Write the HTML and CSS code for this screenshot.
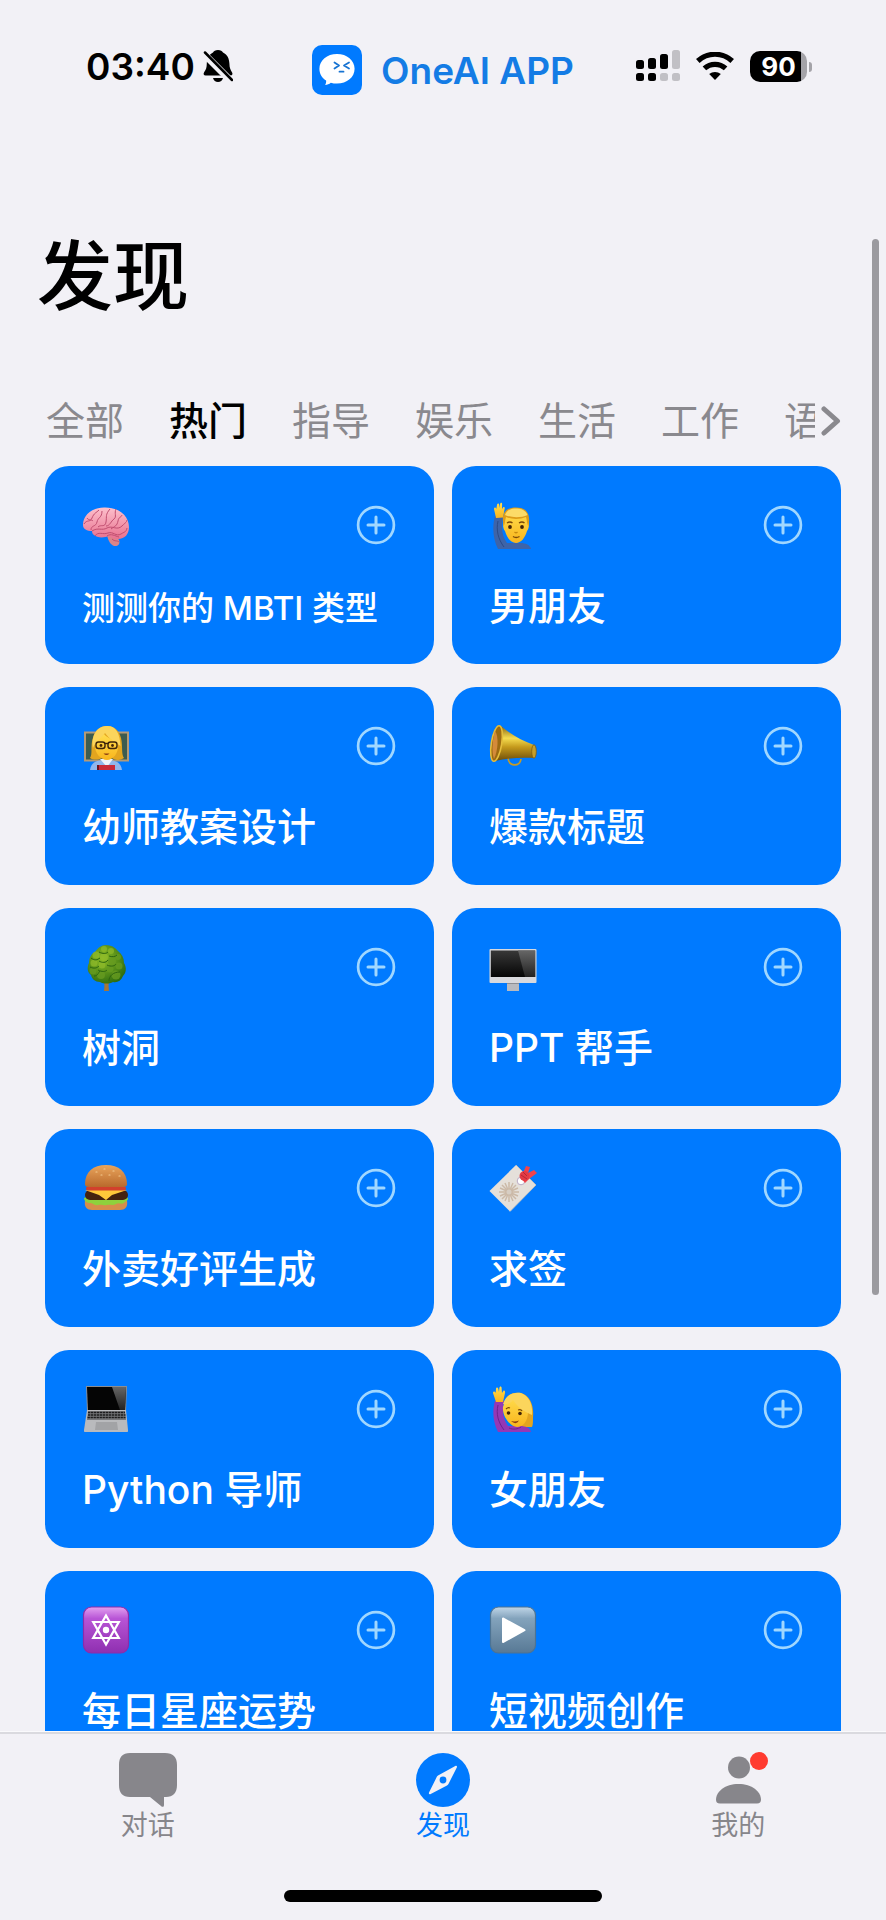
FILE: index.html
```html
<!DOCTYPE html>
<html lang="zh-CN">
<head>
<meta charset="utf-8">
<meta name="viewport" content="width=device-width, initial-scale=1">
<title>发现 - OneAI APP</title>
<link rel="stylesheet" href="styles.css">
</head>

<body>
<svg class="defs" aria-hidden="true">
    <symbol id="plus" viewBox="0 0 40 40">
        <circle cx="20" cy="20" r="17.9" fill="none" stroke="currentColor" stroke-width="2.7"/>
        <path d="M20 12v16M12 20h16" fill="none" stroke="currentColor" stroke-width="3" stroke-linecap="round"/>
    </symbol>
    <linearGradient id="gBrain" x1="0" y1="0" x2="0" y2="1"><stop offset="0" stop-color="#fdc0cc"/><stop offset="1" stop-color="#e8718f"/></linearGradient>
    <linearGradient id="gSkin" x1="0" y1="0" x2="0" y2="1"><stop offset="0" stop-color="#ffdc4d"/><stop offset="1" stop-color="#f9b51c"/></linearGradient>
    <linearGradient id="gGold" x1="0" y1="0" x2="0" y2="1"><stop offset="0" stop-color="#8a6410"/><stop offset=".35" stop-color="#f5dc50"/><stop offset=".6" stop-color="#c59a1c"/><stop offset="1" stop-color="#6d4c0a"/></linearGradient>
    <radialGradient id="gTree" cx=".4" cy=".35" r=".7"><stop offset="0" stop-color="#8cbc25"/><stop offset="1" stop-color="#2d6c10"/></radialGradient>
    <linearGradient id="gScreen" x1="0" y1="0" x2="0" y2="1"><stop offset="0" stop-color="#383838"/><stop offset="1" stop-color="#050505"/></linearGradient>
    <linearGradient id="gGlare" x1="0" y1="0" x2="0" y2="1"><stop offset="0" stop-color="#666"/><stop offset="1" stop-color="#222"/></linearGradient>
    <linearGradient id="gBun" x1="0" y1="0" x2="0" y2="1"><stop offset="0" stop-color="#e9a55c"/><stop offset="1" stop-color="#b9692c"/></linearGradient>
    <linearGradient id="gPurple" x1="0" y1="0" x2="0" y2="1"><stop offset="0" stop-color="#e3a0f0"/><stop offset=".25" stop-color="#b855d6"/><stop offset="1" stop-color="#8f2fb0"/></linearGradient>
    <linearGradient id="gSteel" x1="0" y1="0" x2="0" y2="1"><stop offset="0" stop-color="#c0d6e8"/><stop offset=".25" stop-color="#83a3bc"/><stop offset="1" stop-color="#587995"/></linearGradient>
</svg>

<div class="app">
    <header class="status">
        <div class="status-time">
            <span>03:40</span>
            <svg width="30" height="34" viewBox="0 0 30 34">
                <path d="M15 1c2.600 0 4.200 1 5 2.600 4.600 2.200 6.200 6.400 6.400 11 .1 4.400 1 6.300 2.700 8.800.8 1.500.3 3.100-1.500 3.100H2.600c-2 0-2.500-1.700-1.500-3.200 2-2.600 2.600-4.600 2.700-8.700C4 10 5.600 5.800 10 3.600 10.800 2 12.400 1 15 1z"/>
                <path d="M10 29h10c-.7 2.600-2.500 4-5 4s-4.300-1.400-5-4z"/>
                <path d="M-1 3l31 31" stroke="#f2f1f6" stroke-width="7"/>
                <path d="M2 3.500l27 27.500" stroke="#000" stroke-width="2.500" stroke-linecap="round"/>
            </svg>
        </div>
        <div class="brand">
            <svg width="50" height="50" viewBox="0 0 50 50">
                <rect width="50" height="50" rx="10" fill="#007aff"/>
                <path d="M25 9c10 0 17.600 6.300 17.600 14.800S35 38.600 25 38.600c-2.300 0-4.300-.3-6.200-.9-1.600 1.400-3.500 2.100-5.700 2.200.9-1.300 1.200-2.700 1-4.400C9.800 32.800 7.400 28.800 7.400 23.800 7.400 15.300 15 9 25 9z" fill="#fff"/>
                <path d="M22.500 17.500l4.500 3-4.500 3M37 17.500l-5 3 5 3M27.500 26.700h4" fill="none" stroke="#1673d2" stroke-width="1.800" stroke-linecap="round" stroke-linejoin="round"/>
            </svg>
            <span>OneAI APP</span>
        </div>
        <div class="status-icons">
            <svg width="44" height="32" viewBox="0 0 44 32">
                <rect x="0" y="10" width="8" height="9" rx="2.500"/><rect x="12" y="8" width="8" height="11" rx="2.500"/><rect x="24" y="4" width="8" height="15" rx="2.500"/>
                <rect x="0" y="23" width="8" height="8" rx="2.500"/><rect x="12" y="23" width="8" height="8" rx="2.500"/>
                <g fill="#c1c0c5"><rect x="36" y="0" width="8" height="19" rx="2.500"/><rect x="24" y="23" width="8" height="8" rx="2.500"/><rect x="36" y="23" width="8" height="8" rx="2.500"/></g>
            </svg>
            <svg width="38" height="28" viewBox="0 0 38 28">
                <path d="M19 28l-5.800-6c3.300-2.800 8.300-2.800 11.600 0z"/>
                <path d="M8.400 16.400c6-5.500 15.200-5.500 21.200 0" fill="none" stroke="#000" stroke-width="5.200"/>
                <path d="M1.800 9c9.700-9 24.700-9 34.400 0" fill="none" stroke="#000" stroke-width="5.200"/>
            </svg>
            <span class="battery">90</span>
        </div>
    </header>

    <main class="content">
        <h1>发现</h1>
        <div class="cats">
            <nav class="cats-list">
                <button type="button">全部</button>
                <button type="button" class="on">热门</button>
                <button type="button">指导</button>
                <button type="button">娱乐</button>
                <button type="button">生活</button>
                <button type="button">工作</button>
                <button type="button">语言</button>
            </nav>
            <button type="button" class="cats-more" aria-label="更多">
                <svg width="20" height="30" viewBox="0 0 20 30"><path d="M3 3l13.500 12L3 27" fill="none" stroke="currentColor" stroke-width="5" stroke-linecap="round" stroke-linejoin="round"/></svg>
            </button>
        </div>

        <div class="grid">
            <section class="card">
                <div class="card-top">
                    <svg class="emoji" viewBox="0 0 48 48">
                        <path d="M25 34c1 5 3 9.500 7 11 4 .6 6.500-2 5-6l-3-5z" fill="#d9858a"/>
                        <path d="M1 24C1 14 10 6.500 22 6.500 37 6 47 15 47 26c0 7-4 12-11 12-5 0-7-1.500-9-3-5 2-12 2-15-1-2-1.500-2-3-2-4C5 30 1 28 1 24z" fill="url(#gBrain)"/>
                        <path d="M2 23c3-5 6-1 8-6s4-5 7-8M9 29c0-5 5-3 6-8s5-4 5-11M16 26c3-3 7 1 8-5s-1-7 4-13M24 25c4 0 5-5 8-7s0-6 2-10M29 28c4-3 6-3 7-8s3-3 4-6M10 30c6-4 10 0 15-3s10 3 15-2 4-3 5-6M13 35c3-5 8-1 13-3s8 4 13 1 5-2 6-6M25 35c4-3 8 0 12 1M30 38c3 3 5 1 7 3M5 17c2 3 4 1 6 3" fill="none" stroke="#c04e70" stroke-width="1"/>
                    </svg>
                    <button type="button" class="add" aria-label="添加"><svg><use href="#plus"/></svg></button>
                </div>
                <h2 class="small">测测你的 MBTI 类型</h2>
            </section>

            <section class="card">
                <div class="card-top">
                    <svg class="emoji" viewBox="0 0 48 48">
                        <path d="M6 15c-3 11-2 23 3 33h33c-1-4-5-6-11-6H18c-5-7-6-14-4-26z" fill="#3e64a8"/>
                        <path d="M9 20c-2 9 0 18 6 26" fill="none" stroke="#2c4b87" stroke-width="1"/>
                        <path d="M7 17L5 8c0-2 2-2 2.300 0L8 4c.3-2 2.200-2 2.200 0l.2 3 .7-4c.4-2 2.300-1.500 2 .5L13 8l1-1.500c1-1 2.300 0 1.500 2l-1.500 8z" fill="url(#gSkin)"/>
                        <path d="M14 22c0-9 5-12 13-12s13 3 13 12c0 5-1 7-2 8-2 7-6 12-11 12s-9-5-11-12c-1-1-2-3-2-8z" fill="url(#gSkin)"/>
                        <path d="M14.500 25C12 12 17 6.500 27 6.500S42 12 39.500 25c-1.500-1-1.500-6-2.500-9-6 2.500-14 2.500-20 0-1 3-1 8-2.500 9z" fill="#dd9c1a"/>
                        <path d="M16 14c2-5 6-6.500 11-6.500s10 2 11.500 6.500c-6 3-16 3-22.500 0z" fill="#fcdb68"/>
                        <path d="M18 22q3-2 5.500 0M30 22q3-2 5.500 0" fill="none" stroke="#7a4909" stroke-width="1.400"/>
                        <circle cx="21" cy="26" r="1.900" fill="#442508"/><circle cx="33" cy="26" r="1.900" fill="#442508"/>
                        <path d="M24 35.500q3 2 6.500 0" fill="none" stroke="#7a4909" stroke-width="1.400"/>
                        <path d="M25.500 31q1.500 1.500 3 0" fill="none" stroke="#c78a0e" stroke-width="1.200"/>
                    </svg>
                    <button type="button" class="add" aria-label="添加"><svg><use href="#plus"/></svg></button>
                </div>
                <h2>男朋友</h2>
            </section>

            <section class="card">
                <div class="card-top">
                    <svg class="emoji" viewBox="0 0 48 48">
                        <rect x="3" y="10.500" width="43" height="28" fill="#3c5c50" stroke="#b39a78" stroke-width="2"/>
                        <path d="M8 48c1-7 5-10 16-10s15 3 16 10z" fill="#91b7ec"/>
                        <path d="M18 37h13l-6 8z" fill="#eef3fa"/>
                        <path d="M8 36c3-4 0-12 3-20C13 8 18 4 25 4s12 4 14 12c2 8 0 16 3 20-4 3-10 2-12 0H20c-4 2-9 2-12 0z" fill="#e3a51f"/>
                        <path d="M13 22c1-5 5-6 9-10 4 5 10 5 14 10 1 9-5 16-11 16s-13-7-12-16z" fill="url(#gSkin)"/>
                        <path d="M11 26c-2-10 2-21 13-22 9-1 14 6 14.500 20C33 20 27 17 23 11c-3 5-9 7-12 15z" fill="#fbd55c"/>
                        <g fill="none" stroke="#3e250b" stroke-width="1.400"><rect x="14" y="20" width="9" height="6.500" rx="2.500"/><rect x="26" y="20" width="9" height="6.500" rx="2.500"/><path d="M22.500 21.500h4"/></g>
                        <circle cx="19" cy="23.500" r="1.400" fill="#442508"/><circle cx="30.500" cy="23.500" r="1.400" fill="#442508"/>
                        <path d="M21.500 31.500h6q-3 3-6 0" fill="#8c3f12"/>
                        <rect x="15" y="43" width="18" height="5" fill="#c92b3a"/><path d="M16 43v5" stroke="#6c1420" stroke-width="2"/>
                    </svg>
                    <button type="button" class="add" aria-label="添加"><svg><use href="#plus"/></svg></button>
                </div>
                <h2>幼师教案设计</h2>
            </section>

            <section class="card">
                <div class="card-top">
                    <svg class="emoji" viewBox="0 0 48 48">
                        <path d="M19 36c1 9 12 9 13 1" fill="none" stroke="#c49b28" stroke-width="1.800"/>
                        <path d="M12 4c9 8 21 15 33 19v13c-12-1-26 0-39 3z" fill="url(#gGold)"/>
                        <ellipse cx="45" cy="29.500" rx="2.300" ry="6.800" fill="#c69e2a" stroke="#7f5d12" stroke-width=".8"/>
                        <ellipse cx="7.500" cy="21.500" rx="5.200" ry="18" transform="rotate(9 7.500 21.500)" fill="#9c6a12" stroke="#e5bd3c" stroke-width="1.600"/>
                        <path d="M6 9c4 5 3 20-1 28-3-8-1-22 1-28z" fill="#d48a3a"/>
                    </svg>
                    <button type="button" class="add" aria-label="添加"><svg><use href="#plus"/></svg></button>
                </div>
                <h2>爆款标题</h2>
            </section>

            <section class="card">
                <div class="card-top">
                    <svg class="emoji" viewBox="0 0 48 48">
                        <path d="M21 36h7l-1.500 6 .5 6h-5l.5-6z" fill="#a47638"/>
                        <path d="M24 2c5 0 9 2 12 6 4 3 6 7 6 12 3 5 2 10-1 13-2 5-6 7-10 6-4 2-9 2-13 0-5 0-8-3-9-7-4-3-4-8-2-12 0-5 2-9 6-11 3-4 6-7 11-7z" fill="url(#gTree)"/>
                        <g fill="#91bc2b" opacity=".7"><circle cx="22" cy="6" r="3"/><circle cx="29" cy="8" r="3"/><circle cx="14" cy="12" r="3.500"/><circle cx="22" cy="14" r="4"/><circle cx="12" cy="20" r="3.500"/><circle cx="20" cy="22" r="3.500"/></g>
                        <g fill="#669b20" opacity=".8"><circle cx="30" cy="18" r="4"/><circle cx="36" cy="14" r="3"/><circle cx="37" cy="23" r="3.500"/><circle cx="28" cy="26" r="3.500"/><circle cx="11" cy="28" r="3.500"/><circle cx="19" cy="32" r="4"/><circle cx="34" cy="32" r="4.500"/></g>
                        <path d="M9 15c4 3 6 2 9 0M17 9c4 2 7 2 9 0M17 18c3 2 7 2 9-1M27 13c3 1 6 1 8-1M8 24c4 2 7 1 9-1M16 27c4 2 7 2 9 0M25 22c4 2 8 1 9-1M12 33c4 0 4-3 6-5M27 38c0-5 4-9 11-9" fill="none" stroke="#2d6510" stroke-width="1"/>
                    </svg>
                    <button type="button" class="add" aria-label="添加"><svg><use href="#plus"/></svg></button>
                </div>
                <h2>树洞</h2>
            </section>

            <section class="card">
                <div class="card-top">
                    <svg class="emoji" viewBox="0 0 48 48">
                        <path d="M18 39h12v9H18z" fill="#b8babf"/><path d="M18 39h12v2H18z" fill="#8c8e93"/>
                        <rect x=".5" y="6" width="47" height="34" rx="1" fill="#d8d9dd"/>
                        <rect x="1.800" y="7.500" width="44.400" height="26.500" fill="url(#gScreen)"/>
                        <path d="M29 7.500h17.200V34H36z" fill="url(#gGlare)"/>
                    </svg>
                    <button type="button" class="add" aria-label="添加"><svg><use href="#plus"/></svg></button>
                </div>
                <h2>PPT 帮手</h2>
            </section>

            <section class="card">
                <div class="card-top">
                    <svg class="emoji" viewBox="0 0 48 48">
                        <path d="M3 37h42c1 6-2 9-7 9H10c-5 0-8-3-7-9z" fill="#d58d4c"/>
                        <path d="M2 34c4-3 40-3 44 0 0 3-2 3-4 5-3 2-5-1-8 1s-6 0-9 1-5-1-9 0-5-2-8-2-6-2-6-5z" fill="#8ed13c"/>
                        <rect x="3" y="26" width="43" height="10" rx="5" fill="#44220f"/>
                        <path d="M3 26h42L30 31l-6 5-7-5z" fill="#ffc83a"/>
                        <rect x="4" y="22.500" width="40" height="4" rx="2" fill="#d2402c"/>
                        <path d="M3 20C3 8 11 1 24 1s21 7 21 19c0 3-3 3-6 3H9c-3 0-6 0-6-3z" fill="url(#gBun)"/>
                        <path d="M14 8h1M22 5h1M31 7h1M37 12h1M27 11h1M19 11h1" stroke="#f3cc92" stroke-width="1.200" stroke-linecap="round"/>
                    </svg>
                    <button type="button" class="add" aria-label="添加"><svg><use href="#plus"/></svg></button>
                </div>
                <h2>外卖好评生成</h2>
            </section>

            <section class="card">
                <div class="card-top">
                    <svg class="emoji" viewBox="0 0 48 48">
                        <path d="M27 1l20 20-26 26.500L.5 27z" fill="#e5e0da"/>
                        <path d="M27 1l20 20-26 26.500" fill="none" stroke="#c8c3bd" stroke-width=".8"/>
                        <g stroke="#cbb9a7" stroke-width="1.500"><path d="M20 18v20M10 28h20M13 21l14 14M27 21L13 35M16 19l8 18M24 19l-8 18M11 24l18 8M29 24l-18 8"/></g>
                        <circle cx="20" cy="28" r="2.500" fill="#d7cec4"/>
                        <circle cx="32" cy="17" r="3.800" fill="#fff" stroke="#b9a9c4" stroke-width="1"/>
                        <path d="M32 14l5-12 4 1-2 6 6-3 3 3-8 6-4 4z" fill="#f0434c"/>
                        <circle cx="35.500" cy="12" r="5" fill="#e33b45"/><path d="M32 11l6 4M34 8l4 4" stroke="#b82633"/>
                    </svg>
                    <button type="button" class="add" aria-label="添加"><svg><use href="#plus"/></svg></button>
                </div>
                <h2>求签</h2>
            </section>

            <section class="card">
                <div class="card-top">
                    <svg class="emoji" viewBox="0 0 48 48">
                        <path d="M4 1h41l-1 25H5z" fill="#8c8d90"/>
                        <path d="M5 2h39l-1 23H6z" fill="#050505"/>
                        <path d="M30 2h14l-1 23h-5z" fill="url(#gGlare)"/>
                        <path d="M5 25h39l2 20c0 1.500 0 2-1 2H3c-1 0-1-.5-1-2z" fill="#b9babd"/>
                        <path d="M6 26h37l1 9H5z" fill="#77787b"/>
                        <path d="M6 27.500h37M6 30h37.500M5.500 32.500h38" stroke="#1c1c1e" stroke-width="1.600" stroke-dasharray="2.400 .6"/>
                        <path d="M14 37h21l1 8H13z" fill="#a2a3a6"/>
                    </svg>
                    <button type="button" class="add" aria-label="添加"><svg><use href="#plus"/></svg></button>
                </div>
                <h2>Python 导师</h2>
            </section>

            <section class="card">
                <div class="card-top">
                    <svg class="emoji" viewBox="0 0 48 48">
                        <path d="M15 18C18 8 25 7 32 8c10 3 13 14 12 24 0 4 0 8-1 10H26z" fill="#e3a51f"/>
                        <path d="M6 16c-3 10-2 21 3 31h33c-1-4-5-6-11-6H19c-5-7-6-14-4-25z" fill="#9438b5"/>
                        <path d="M9 20c-2 9 0 17 6 25M20 43c4 2 9 1 12-1" fill="none" stroke="#6f228e" stroke-width="1"/>
                        <path d="M7 17L4 8c0-2 2-2 2.600 0L7 4c0-2 2-2 2.300 0l.7 3 .4-4c.2-2 2.200-2 2.200 0l.4 5 1.300-2c1-1 2.200 0 1.700 2l-2 9z" fill="url(#gSkin)"/>
                        <path d="M14 22c1-5 5-9 10-10 4 6 13 8 15 15 0 9-5 15-11 15s-15-10-14-20z" fill="url(#gSkin)"/>
                        <path d="M14 19C17 9 25 7 32 8c8 3 12 11 11 22-7-3-14-7-19-15-2 3-6 5-10 4z" fill="#fbd55c"/>
                        <path d="M17 24q2-2 4-1M29 25q3-1 4 1" fill="none" stroke="#7a4909" stroke-width="1.200"/>
                        <circle cx="19.500" cy="28" r="1.800" fill="#442508"/><circle cx="31" cy="28.500" r="1.800" fill="#442508"/>
                        <path d="M22 36q4 1 8-.5-3 5-8 .5" fill="#8c3f12"/>
                    </svg>
                    <button type="button" class="add" aria-label="添加"><svg><use href="#plus"/></svg></button>
                </div>
                <h2>女朋友</h2>
            </section>

            <section class="card">
                <div class="card-top">
                    <svg class="emoji" viewBox="0 0 48 48">
                        <rect x="1.500" y="1" width="45" height="46" rx="8" fill="url(#gPurple)" stroke="#8b2cab" stroke-width="1.200"/>
                        <path d="M24 9.500L36.800 32H11.200zM24 38.500L11.200 16h25.600z" fill="none" stroke="#fff" stroke-width="2.200"/>
                        <circle cx="24" cy="24" r="3.200" fill="#fff"/>
                    </svg>
                    <button type="button" class="add" aria-label="添加"><svg><use href="#plus"/></svg></button>
                </div>
                <h2>每日星座运势</h2>
            </section>

            <section class="card">
                <div class="card-top">
                    <svg class="emoji" viewBox="0 0 48 48">
                        <rect x="1.500" y="1" width="45" height="46" rx="8" fill="url(#gSteel)" stroke="#4c7394" stroke-width="1.200"/>
                        <path d="M14 12.500v23.500l21.500-11.800z" fill="#fff" stroke="#fff" stroke-width="2" stroke-linejoin="round"/>
                    </svg>
                    <button type="button" class="add" aria-label="添加"><svg><use href="#plus"/></svg></button>
                </div>
                <h2>短视频创作</h2>
            </section>
        </div>
    </main>

    <footer class="tabbar">
        <nav>
            <a href="#chat">
                <svg width="60" height="56" viewBox="0 0 60 56" fill="currentColor"><path d="M12 1h35c8 0 12 4 12 12v20c0 8-4 12-11 12h-2v8c0 2-1.500 2.500-3 1L32 45H12C4.500 45 1 41 1 33V13C1 5 4.500 1 12 1z"/></svg>
                <span>对话</span>
            </a>
            <a href="#discover" class="on">
                <svg width="56" height="56" viewBox="0 0 56 56"><circle cx="28" cy="28" r="27" fill="currentColor"/><path d="M40.300 14L23 23.500c-.8.500-1 1-1.300 1.600L14 40.500c-.6 1.500.5 2.200 1.700 1.500L32 33.400c.8-.5 1.200-.9 1.600-1.700l8.200-16.200c.6-1.300-.2-2.100-1.500-1.500z" fill="#f2f1f6"/><circle cx="28" cy="28" r="3.400" fill="currentColor"/></svg>
                <span>发现</span>
            </a>
            <a href="#me">
                <svg width="60" height="56" viewBox="0 0 60 56" fill="currentColor"><circle cx="31" cy="15.500" r="11"/><path d="M12 51.500c-3 0-4-1.300-4-3.700C8 39.500 17 32 30.500 32S53 39.500 53 47.800c0 2.400-1.200 3.700-4 3.700z"/><circle cx="51" cy="9" r="9" fill="#ff3b30"/></svg>
                <span>我的</span>
            </a>
        </nav>
        <div class="home"></div>
    </footer>

    <div class="scroll-thumb"></div>
</div>
</body>
</html>
```
FILE: styles.css
```css
*{box-sizing:border-box;}
body{margin:0; background:#f2f1f6; color:#000; font-family:Inter, "Noto Sans CJK SC", sans-serif;}
button{padding:0; border:0; background:none; font:inherit; color:inherit; cursor:pointer;}
svg{display:block; flex:none;}
h1,h2{margin:0;}
.defs{position:absolute; width:0; height:0;}
.app{position:relative; display:flex; flex-direction:column; height:100vh; overflow:hidden;}

/* 状态栏 */
.status{flex:none; display:grid; grid-template-columns:1fr auto 1fr; align-items:center; height:140px; padding:0 79px 8px;}
.status-time,.brand,.status-icons{display:flex; align-items:center;}
.status-time{gap:8px; padding-left:7px; font-size:37px; font-weight:600;}
.brand{gap:19px; padding-top:8px; font-size:37px; font-weight:600; color:#147ce5;}
.status-icons{gap:16px; justify-content:flex-end;}
.battery{position:relative; width:57px; height:31px; border-radius:10px; background:linear-gradient(to right, #000 51px, #a4a3a8 51px); color:#fff; font-size:26px; font-weight:700; line-height:31px; text-align:center;}
.battery::after{content:""; position:absolute; right:-5px; top:11px; width:3px; height:10px; border-radius:0 3px 3px 0; background:#a4a3a8;}

/* 内容 */
.content{flex:1; min-height:0; padding:82px 45px 0; overflow-y:auto; scrollbar-width:none;}
h1{margin-left:-8px; font-size:76px; line-height:108px; font-weight:500;}
.cats{display:flex; align-items:center; justify-content:space-between; height:90px; margin-top:46px;}
.cats-list{flex:1; min-width:0; display:flex; gap:45px; padding-left:1px; overflow:hidden;}
.cats-list button{flex:none; font-size:39px; line-height:56px; color:#8a898e;}
.cats-list .on{color:#000; font-weight:500;}
.cats-more{flex:none; width:26px; padding-left:6px; color:#8a898e;}
.grid{display:grid; grid-template-columns:1fr 1fr; gap:23px 18px;}
.card{height:198px; padding:35px 38px 0 37px; border-radius:24px; background:#007aff; color:#fff;}
.card-top{display:flex; align-items:center; justify-content:space-between;}
.emoji{width:48px; height:48px;}
.add{color:#a0d7ff;}
.add svg{width:40px; height:40px;}
.card h2{margin-top:29px; font-size:39px; line-height:56px; font-weight:500; white-space:nowrap;}
.card h2.small{font-size:33px; line-height:60px;}

/* 底部导航 */
.tabbar{flex:none; height:189px; border-top:1px solid #fafafc; background:#f2f1f6;}
.tabbar nav{display:flex; padding-top:18px; border-top:2px solid #dadadf;}
.tabbar a{flex:1; display:flex; flex-direction:column; align-items:center; color:#87868b; font-size:27px; line-height:36px; text-decoration:none;}
.tabbar a.on{color:#007aff;}
.home{width:36%; height:12px; margin:46px auto 0; border-radius:6px; background:#000;}
.scroll-thumb{position:absolute; top:239px; right:7px; width:7px; height:55%; border-radius:4px; background:#9b9a9f;}
```
